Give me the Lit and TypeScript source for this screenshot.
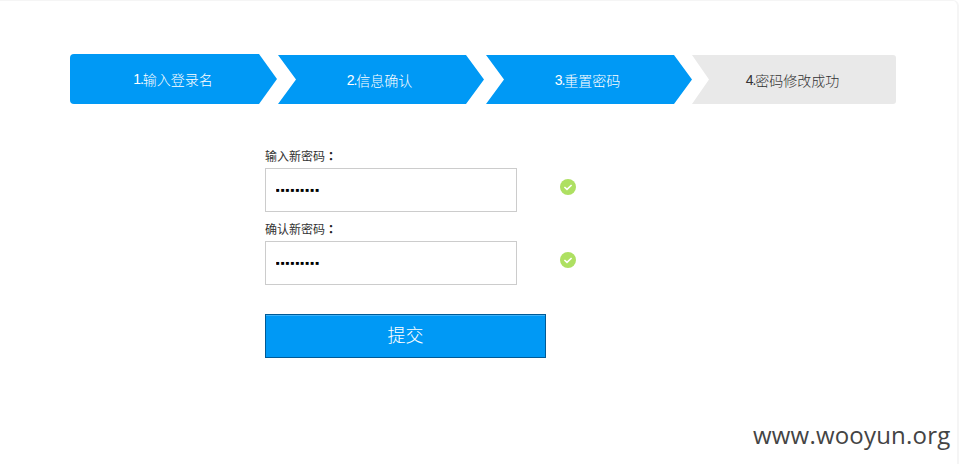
import { LitElement, html, css } from "lit";
import { customElement } from "lit/decorators.js";

const check = html`<svg class="check" width="16" height="16" viewBox="0 0 16 16"><circle cx="8" cy="8" r="8" fill="#aee062"/><path d="M4.4 8 L7 10.4 L11.6 6" fill="none" stroke="#fff" stroke-width="1.6"/></svg>`;

@customElement("app-root")
export class AppRoot extends LitElement {
  static styles = css`
    :host {
      display: block;
      width: 959px;
      height: 464px;
      overflow: hidden;
      background: #fff;
      font-family: "Liberation Sans", "Noto Sans CJK SC", sans-serif;
    }
    .page {
      position: relative;
      box-sizing: border-box;
      height: 464px;
      width: 959px;
      padding: 53px 0 0 70px;
      border-top: 1px solid #f5f5f5;
      border-right: 2px solid #f5f5f5;
      border-top-right-radius: 6px;
    }
    .steps {
      display: flex;
      height: 50px;
      width: 826px;
    }
    .step {
      display: flex;
      align-items: center;
      justify-content: center;
      box-sizing: border-box;
      height: 49px;
      margin-top: 1px;
      padding-right: 3px;
      font-size: 14px;
      font-weight: 300;
      color: #fff;
      background: #0099f5;
    }
    .num {
      letter-spacing: -1px;
    }
    .s1 {
      width: 207px;
      height: 50px;
      margin-top: 0;
      padding-right: 1px;
      border-radius: 4px 0 0 4px;
      clip-path: polygon(0 0, 189px 0, 207px 25px, 189px 100%, 0 100%);
    }
    .s2, .s3 {
      width: 206px;
      clip-path: polygon(0 0, 188px 0, 206px 24.5px, 188px 100%, 0 100%, 18px 24.5px);
    }
    .s2 { margin-left: 1px; }
    .s3 { margin-left: 2px; }
    .s4 {
      width: 204px;
      color: #333;
      background: #e9e9e9;
      border-radius: 0 3px 3px 0;
      clip-path: polygon(0 0, 100% 0, 100% 100%, 0 100%, 17px 24.5px);
    }
    .form {
      display: flex;
      flex-direction: column;
      margin: 44px 0 0 195px;
    }
    .label {
      font-size: 12px;
      line-height: 16px;
      height: 16px;
      color: #333;
      margin-bottom: 4px;
    }
    .colon {
      font-family: "Noto Sans CJK TC", sans-serif;
      font-weight: 700;
      color: #222;
    }
    .label.second { margin-top: 9px; }
    .row {
      display: flex;
      align-items: center;
      gap: 43px;
    }
    input {
      box-sizing: border-box;
      width: 252px;
      height: 44px;
      padding: 0 10px;
      border: 1px solid #ccc;
      outline: none;
      background: #fff;
      color: #000;
      font-family: "Liberation Sans", sans-serif;
      font-size: 6px;
      letter-spacing: 1.3px;
      -webkit-text-security: square;
    }
    .check {
      display: block;
      margin-bottom: 6px;
    }
    button {
      box-sizing: border-box;
      width: 281px;
      height: 44px;
      margin-top: 29px;
      padding: 0 0 4px;
      border: 1px solid #005a96;
      box-shadow: inset 0 1px 0 #3fb2f7;
      background: #0099f5;
      color: #fff;
      font-family: inherit;
      font-weight: 300;
      font-size: 18px;
    }
    .mark {
      position: absolute;
      left: 753px;
      top: 418px;
      font-family: "Open Sans", sans-serif;
      font-size: 24px;
      letter-spacing: 0.2px;
      line-height: 32px;
      color: #444;
      white-space: nowrap;
    }
  `;

  render() {
    return html`
      <div class="page">
        <div class="steps">
          <div class="step s1"><span class="num">1.</span>输入登录名</div>
          <div class="step s2"><span class="num">2.</span>信息确认</div>
          <div class="step s3"><span class="num">3.</span>重置密码</div>
          <div class="step s4"><span class="num">4.</span>密码修改成功</div>
        </div>
        <form class="form" @submit=${(e: Event) => e.preventDefault()}>
          <div class="label">输入新密码<span class="colon">：</span></div>
          <div class="row"><input type="text" value="123456789" />${check}</div>
          <div class="label second">确认新密码<span class="colon">：</span></div>
          <div class="row"><input type="text" value="123456789" />${check}</div>
          <button type="submit">提交</button>
        </form>
        <div class="mark">www.wooyun.org</div>
      </div>
    `;
  }
}
